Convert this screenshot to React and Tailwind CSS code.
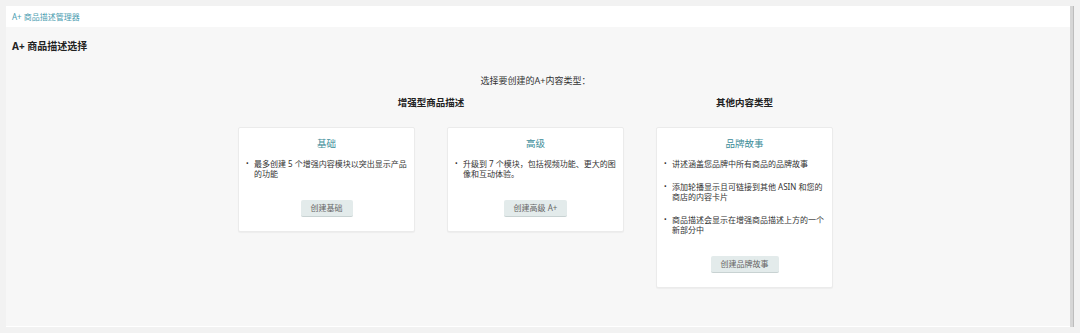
const font = { fontFamily: '"Noto Sans", "Noto Sans CJK SC", sans-serif' }

function Card({ title, items, button, spaced }) {
  return (
    <div className="w-[177px] rounded-[2px] border border-[#ebebeb] bg-white pb-[14px] pl-[7px] pr-[3px] pt-[9px] shadow-[0_1px_1px_rgba(0,0,0,0.04)]">
      <h3 className="pr-[4px] text-center text-[9.5px] leading-[14px] text-[#3b8c98]">{title}</h3>
      <ul className={`mt-[8px] ${spaced ? 'space-y-[13px]' : ''}`}>
        {items.map((text) => (
          <li key={text} className="flex text-[8px] leading-[10px] text-[#333]">
            <span className="w-[8px] shrink-0 text-[7px]">•</span>
            <span className="flex-1">{text}</span>
          </li>
        ))}
      </ul>
      <div className="mt-[21px] flex justify-center pr-[4px]">
        <button className="h-[17px] rounded-[2px] border-b border-[#c8d2d2] bg-[#e3ebeb] px-[10px] text-[8px] leading-[16px] text-[#666]">{button}</button>
      </div>
    </div>
  )
}

export default function App() {
  return (
    <div className="h-[333px] bg-[#f2f2f2] px-[6px] pt-[6px]" style={font}>
      <div className="flex">
        <div className="flex-1">
          <div className="flex h-[21px] items-center bg-white px-[6px] text-[8px] text-[#4a9cb0]">A+ 商品描述管理器</div>
          <div className="h-[300px] border-b border-white bg-[#f7f7f7]">
            <h1 className="px-[6px] pt-[12px] text-[10px] font-bold leading-[14px] text-[#222]">A+ 商品描述选择</h1>
            <p className="mt-[22px] pr-[5px] text-center text-[9px] leading-[12px] text-[#333]">选择要创建的A+内容类型：</p>
            <div className="mt-[10px] flex items-start justify-center gap-[32px] pr-[5px]">
              <div>
                <h2 className="text-center text-[9.5px] font-bold leading-[12px] text-[#222]">增强型商品描述</h2>
                <div className="mt-[18px] flex items-start gap-[32px]">
                  <Card title="基础" items={['最多创建 5 个增强内容模块以突出显示产品的功能']} button="创建基础" />
                  <Card title="高级" items={['升级到 7 个模块，包括视频功能、更大的图像和互动体验。']} button="创建高级 A+" />
                </div>
              </div>
              <div>
                <h2 className="text-center text-[9.5px] font-bold leading-[12px] text-[#222]">其他内容类型</h2>
                <div className="mt-[18px]">
                  <Card
                    title="品牌故事"
                    spaced
                    items={['讲述涵盖您品牌中所有商品的品牌故事', '添加轮播显示且可链接到其他 ASIN 和您的商店的内容卡片', '商品描述会显示在增强商品描述上方的一个新部分中']}
                    button="创建品牌故事"
                  />
                </div>
              </div>
            </div>
          </div>
        </div>
        <div className="w-[4px] border-r border-[#bdbdbd] bg-[#d6d6d6]" />
      </div>
    </div>
  )
}
